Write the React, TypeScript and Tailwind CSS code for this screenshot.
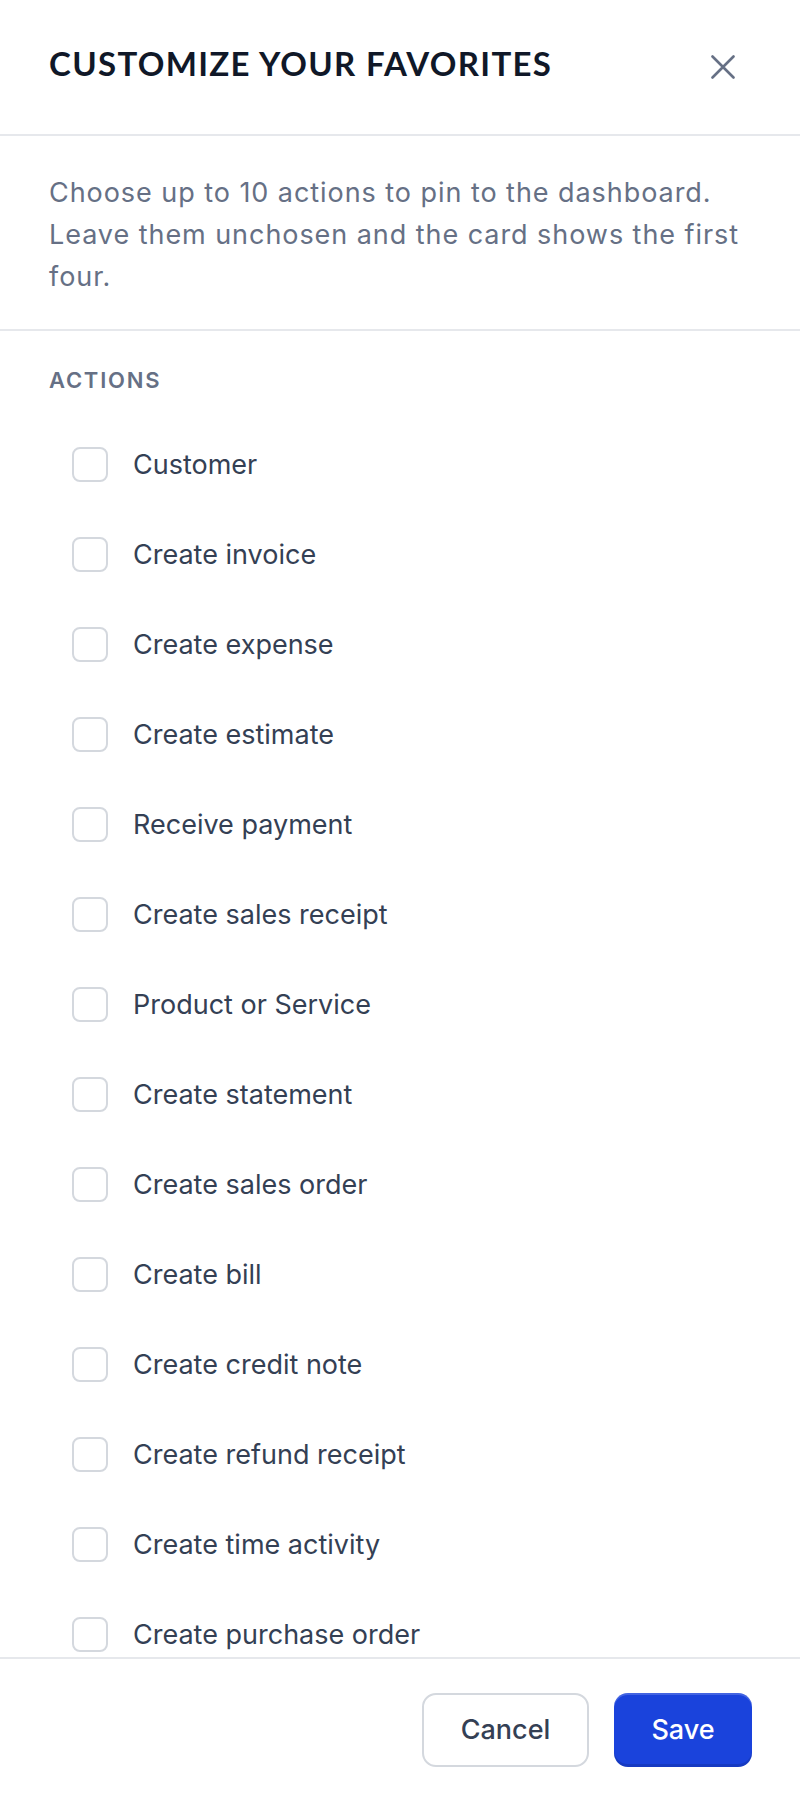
import { useState } from "react"

const actions = [
  "Customer",
  "Create invoice",
  "Create expense",
  "Create estimate",
  "Receive payment",
  "Create sales receipt",
  "Product or Service",
  "Create statement",
  "Create sales order",
  "Create bill",
  "Create credit note",
  "Create refund receipt",
  "Create time activity",
  "Create purchase order",
]

export default function App() {
  const [checked, setChecked] = useState<Record<string, boolean>>({})

  const toggle = (name: string) =>
    setChecked((prev) => ({ ...prev, [name]: !prev[name] }))

  return (
    <div className="h-[1800px] w-[800px] bg-white flex flex-col font-['Inter','Noto_Sans',sans-serif]">
      {/* header */}
      <div className="h-[136px] shrink-0 flex items-center justify-between pl-[49px] pr-[65px] border-b-2 border-[#e6e8ec]">
        <h2 className="mb-[8px] font-['Lato','Noto_Sans',sans-serif] font-bold text-[33px] leading-none tracking-[0.04em] text-[#101828]">
          CUSTOMIZE YOUR FAVORITES
        </h2>
        <button className="w-[24px] h-[24px] flex items-center justify-center">
          <svg width="24" height="24" viewBox="0 0 24 24" fill="none">
            <path d="M1.5 1.5L22.5 22.5M22.5 1.5L1.5 22.5" stroke="#667085" strokeWidth="2.6" strokeLinecap="round" />
          </svg>
        </button>
      </div>

      {/* description */}
      <div className="shrink-0 px-[49px] pt-[36px] pb-[31px] border-b-2 border-[#e6e8ec]">
        <p className="text-[27px] leading-[42px] tracking-[0.035em] text-[#667085]">
          Choose up to 10 actions to pin to the dashboard. Leave them unchosen and the card shows the first four.
        </p>
      </div>

      {/* actions list */}
      <div className="flex-1 min-h-0 overflow-hidden px-[49px] pt-[35px]">
        <div className="text-[22px] leading-[28px] font-semibold tracking-[0.08em] text-[#667085]">
          ACTIONS
        </div>
        <ul className="mt-[25px] pl-[23px]">
          {actions.map((name) => (
            <li key={name} className="h-[90px] flex items-center gap-[25px]" onClick={() => toggle(name)}>
              <span
                className={`w-[36px] h-[35px] shrink-0 rounded-[8px] border-2 ${
                  checked[name] ? "bg-[#1a43dc] border-[#1a43dc]" : "bg-white border-[#d4d8de]"
                }`}
              />
              <span className="text-[27px] leading-none text-[#344054]">{name}</span>
            </li>
          ))}
        </ul>
      </div>

      {/* footer */}
      <div className="shrink-0 border-t-2 border-[#e6e8ec] pt-[34px] pb-[33px] pr-[48px] flex justify-end gap-[25px]">
        <button className="w-[167px] h-[74px] rounded-[14px] border-2 border-[#d4d8de] bg-white text-[27px] font-medium text-[#344054]">
          Cancel
        </button>
        <button className="w-[138px] h-[74px] rounded-[14px] bg-[#1a43dc] text-[27px] font-medium text-white shadow-[inset_0_-3px_0_rgba(0,0,0,0.12),inset_0_2px_0_rgba(255,255,255,0.18)]">
          Save
        </button>
      </div>
    </div>
  )
}
